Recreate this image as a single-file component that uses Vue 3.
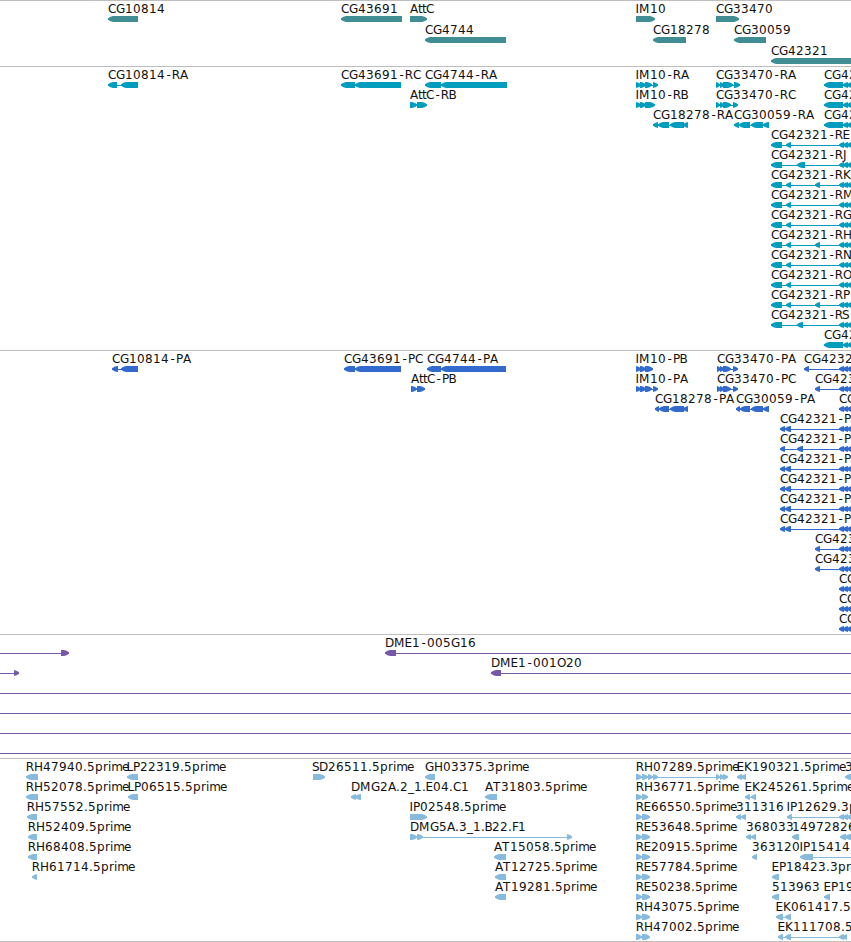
<template>
  <div class="browser">
    <section v-for="track in tracks" :key="track.id" class="track" :class="track.id" :style="{ height: track.height + 'px' }">
      <svg width="100%" :height="track.height - 1">
        <g v-for="(f, i) in track.features" :key="i" :transform="`translate(0 ${f.row * track.pitch})`">
          <rect v-if="f.end > f.start" class="shape" :x="f.start" y="18" :width="f.end - f.start" height="1" />
          <polygon v-for="(s, j) in f.segs" :key="j" class="shape" :points="arrow(s, f.dir)" />
          <text v-if="f.name" :x="glyphs(f.name, f.start)" y="12">{{ f.name }}</text>
        </g>
      </svg>
    </section>
  </div>
</template>

<script setup>
// feature: row, label, exons, direction, [line start, line end]
function ft(row, name, segs, dir = -1, span) {
  const start = span ? span[0] : segs[0][0];
  const end = span ? span[1] : segs[segs.length - 1][1];
  return { row, name, segs, dir, start, end };
}

// whole-pixel advances of the label font
const advance = {
  A: 8, B: 7, C: 8, D: 9, E: 7, F: 6, G: 9, H: 9, I: 3, J: 4, K: 8, L: 6, M: 11, N: 9, O: 9,
  P: 7, R: 8, S: 6, T: 8, t: 4, p: 8, r: 5, i: 4, m: 10, e: 7, '.': 4, '-': 7, _: 6
};

// glyphs that are wider or narrower than their cell
const nudge = { '-': 1.4, S: -0.9, E: -0.6, B: -0.6, L: -0.6, m: -0.8, I: -0.4, R: -0.3 };

function glyphs(name, x) {
  const xs = [];
  for (const c of name) {
    xs.push(x + (nudge[c] || 0));
    x += advance[c] || 8;
  }
  return xs.join(' ');
}

function arrow([a, b], dir) {
  const head = Math.min(5, b - a);
  const tip = dir < 0 ? a : b;
  const neck = tip - dir * head;
  const mid = tip - dir * head * 0.5;
  const back = dir < 0 ? b : a;
  return `${tip},17.3 ${mid},15.8 ${neck},15 ${back},15 ${back},21 ${neck},21 ${mid},20.2 ${tip},18.7`;
}

const edge = [[839, 844], [843, 848], [847, 852]];
const edgeWide = [[824, 843], [843, 848], [847, 852]];

const genes = [
  ft(0, 'CG10814', [[108, 138]]),
  ft(0, 'CG43691', [[341, 402]]),
  ft(0, 'AttC', [[410, 427]], 1),
  ft(1, 'CG4744', [[425, 506]]),
  ft(0, 'IM10', [[636, 655]], 1),
  ft(1, 'CG18278', [[653, 686]]),
  ft(0, 'CG33470', [[716, 739]], 1),
  ft(1, 'CG30059', [[734, 766]]),
  ft(2, 'CG42321', [[771, 860]])
];

// extra exons of the long isoforms, by name
const isoforms = [
  ['RE', [786, 791]],
  ['RJ', [797, 805]],
  ['RK', [786, 791], [815, 820]],
  ['RM', [786, 791]],
  ['RG', [786, 791]],
  ['RH', [786, 791], [815, 820]],
  ['RN', [786, 791]],
  ['RO', [786, 791]],
  ['RP', [786, 791], [815, 820]],
  ['RS', [797, 803]]
];

const transcripts = [
  ft(0, 'CG10814-RA', [[108, 117], [121, 138]]),
  ft(0, 'CG43691-RC', [[341, 355], [355, 401]]),
  ft(0, 'CG4744-RA', [[425, 441], [441, 507]]),
  ft(1, 'AttC-RB', [[410, 417], [417, 427]], 1),
  ft(0, 'IM10-RA', [[636, 641], [640, 646], [645, 652], [653, 658]], 1),
  ft(1, 'IM10-RB', [[636, 641], [640, 646], [645, 655]], 1),
  ft(2, 'CG18278-RA', [[653, 658], [658, 669], [670, 684], [683, 688]]),
  ft(0, 'CG33470-RA', [[716, 720], [720, 724], [723, 733], [734, 740]], 1),
  ft(1, 'CG33470-RC', [[716, 720], [720, 724], [723, 731], [733, 738]], 1),
  ft(2, 'CG30059-RA', [[734, 739], [739, 750], [751, 763], [763, 769]]),
  ft(0, 'CG42', edgeWide),
  ft(1, 'CG42', edgeWide),
  ft(2, 'CG42', edgeWide),
  ...isoforms.map(([name, ...exons], i) => ft(i + 3, 'CG42321-' + name, [[771, 782], ...exons, ...edge])),
  ft(13, 'CG42', edgeWide)
];

const proteins = [
  ft(0, 'CG10814-PA', [[112, 118], [121, 138]]),
  ft(0, 'CG43691-PC', [[344, 355], [355, 401]]),
  ft(0, 'CG4744-PA', [[427, 441], [441, 506]]),
  ft(1, 'AttC-PB', [[411, 417], [417, 425]], 1),
  ft(0, 'IM10-PB', [[636, 641], [640, 646], [645, 653]], 1),
  ft(1, 'IM10-PA', [[636, 641], [640, 646], [645, 652], [653, 658]], 1),
  ft(2, 'CG18278-PA', [[655, 659], [659, 669], [670, 684], [683, 688]]),
  ft(0, 'CG33470-PA', [[717, 721], [720, 724], [723, 731], [733, 738]], 1),
  ft(1, 'CG33470-PC', [[717, 721], [720, 724], [723, 731], [733, 738]], 1),
  ft(2, 'CG30059-PA', [[736, 740], [740, 750], [751, 763], [763, 769]]),
  ft(0, 'CG4232', [[804, 809], ...edge]),
  ft(1, 'CG423', [[815, 820], ...edge]),
  ft(2, 'CG', edge),
  ...[3, 4, 5, 6, 7, 8].map(row => ft(row, 'CG42321-P', [[780, 785], row === 4 ? [797, 803] : [785, 791], ...edge])),
  ...[9, 10].map(row => ft(row, 'CG423', [[815, 820], ...edge])),
  ...[11, 12, 13].map(row => ft(row, 'CG', edge))
];

const bacs = [
  ft(0, '', [[61, 69]], 1, [0, 62]),
  ft(1, '', [[14, 19]], 1, [0, 15]),
  ft(0, 'DME1-005G16', [[385, 396]], -1, [385, 851]),
  ft(1, 'DME1-001O20', [[491, 501]], -1, [491, 851]),
  ...[2, 3, 4, 5].map(row => ft(row, '', [], -1, [0, 851]))
];

const pair = [[636, 642], [642, 650]];

const ests = [
  ft(0, 'RH47940.5prime', [[26, 38]]),
  ft(1, 'RH52078.5prime', [[26, 38]]),
  ft(2, 'RH57552.5prime', [[27, 37]]),
  ft(3, 'RH52409.5prime', [[28, 37]]),
  ft(4, 'RH68408.5prime', [[28, 37]]),
  ft(5, 'RH61714.5prime', [[32, 37]]),
  ft(0, 'LP22319.5prime', [[127, 138]]),
  ft(1, 'LP06515.5prime', [[128, 138]]),
  ft(0, 'SD26511.5prime', [[313, 325]], 1),
  ft(1, 'DMG2A.2_1.E04.C1', [[351, 356], [355, 361]]),
  ft(0, 'GH03375.3prime', [[425, 435]]),
  ft(1, 'AT31803.5prime', [[485, 497]]),
  ft(2, 'IP02548.5prime', [[410, 427]], 1),
  ft(3, 'DMG5A.3_1.B22.F1', [[410, 417], [417, 423], [567, 572]], 1),
  ft(4, 'AT15058.5prime', [[494, 506]]),
  ft(5, 'AT12725.5prime', [[495, 506]]),
  ft(6, 'AT19281.5prime', [[495, 506]]),
  ft(0, 'RH07289.5prime', [[636, 642], [642, 648], [648, 653], [653, 658], [716, 720], [720, 724], [723, 728]], 1),
  ft(1, 'RH36771.5prime', [[636, 642], [642, 648]], 1),
  ft(2, 'RE66550.5prime', pair, 1),
  ft(3, 'RE53648.5prime', pair, 1),
  ft(4, 'RE20915.5prime', pair, 1),
  ft(5, 'RE57784.5prime', pair, 1),
  ft(6, 'RE50238.5prime', pair, 1),
  ft(7, 'RH43075.5prime', pair, 1),
  ft(8, 'RH47002.5prime', pair, 1),
  ft(0, 'EK190321.5prime', [[737, 742], [741, 746]]),
  ft(0, '3', [[845, 852]]),
  ft(1, 'EK245261.5prime', [[745, 750], [751, 756]]),
  ft(2, '311316', [[736, 741], [741, 746]]),
  ft(2, 'IP12629.3p', [[787, 792], ...edge]),
  ft(3, '368033', [[746, 751], [751, 756]]),
  ft(3, '149728', [[792, 799]]),
  ft(3, '26', [[840, 846], [845, 851]]),
  ft(4, '363120', [[752, 757]]),
  ft(4, 'IP15414', [[800, 813]], -1, [800, 851]),
  ft(5, 'EP18423.3pr', [[772, 779]]),
  ft(6, '513963', [[772, 779]]),
  ft(6, 'EP19', [[824, 830]]),
  ft(7, 'EK061417.5', [[776, 783], [785, 791]]),
  ft(8, 'EK111708.5', [[778, 783], [785, 791], [839, 844], [843, 847]])
];

const tracks = [
  { id: 'genes', height: 66, pitch: 21, features: genes },
  { id: 'transcripts', height: 284, pitch: 20, features: transcripts },
  { id: 'proteins', height: 284, pitch: 20, features: proteins },
  { id: 'bacs', height: 124, pitch: 20, features: bacs },
  { id: 'ests', height: 183, pitch: 20, features: ests }
];
</script>

<style>
body {
  margin: 0;
  background: #fff;
}
</style>

<style scoped>
.browser {
  width: 851px;
  height: 942px;
  overflow: hidden;
  border-bottom: 1px solid #bebebe;
  box-sizing: border-box;
}

.track {
  box-sizing: border-box;
  border-top: 1px solid #bebebe;
  overflow: hidden;
}

.track svg {
  display: block;
}

text {
  font-family: "DejaVu Sans", sans-serif;
  font-size: 12px;
  fill: #111;
}

.genes .shape { fill: #408e93; }
.transcripts .shape { fill: #009dbf; }
.proteins .shape { fill: #326bcd; }
.bacs .shape { fill: #7658a8; }
.ests .shape { fill: #87bbdd; }
</style>
